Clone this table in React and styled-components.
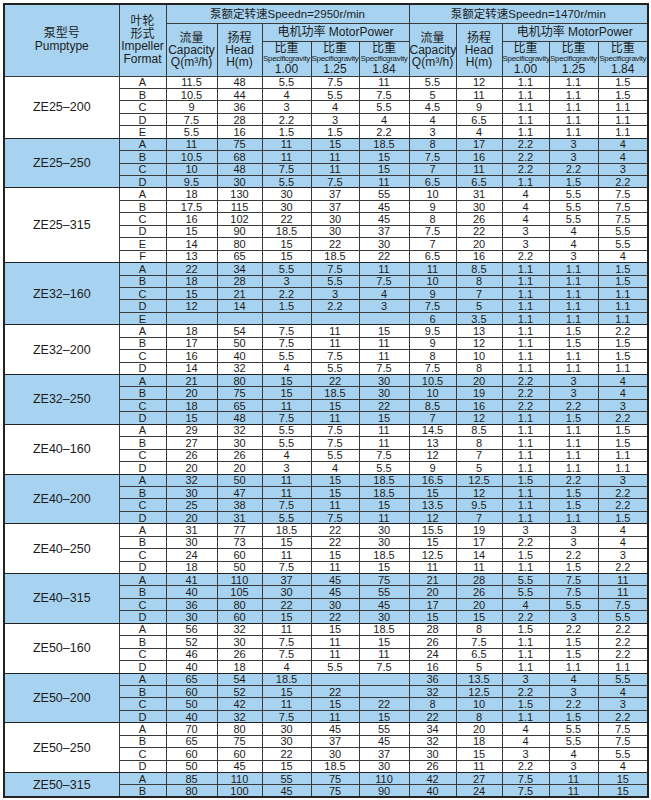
import React from 'react';
import styled, { createGlobalStyle } from 'styled-components';

const GlobalStyle = createGlobalStyle`
    html, body {
        margin: 0;
        padding: 0;
        background: #ffffff;
    }
`;

const BLUE = '#a7d3f0';
const LINE = '#3a3a3a';
const NARROW = '"Liberation Sans Narrow", "Arial Narrow", "Liberation Sans", Arial, sans-serif';

// column widths, left to right
const widths = [115, 47, 51, 45, 49, 48, 50, 47, 46, 47, 49, 50];

const groups = [
    { name: 'ZE25–200', rows: [
        ['A', '11.5', '48', '5.5', '7.5', '11', '5.5', '12', '1.1', '1.1', '1.5'],
        ['B', '10.5', '44', '4', '5.5', '7.5', '5', '11', '1.1', '1.1', '1.5'],
        ['C', '9', '36', '3', '4', '5.5', '4.5', '9', '1.1', '1.1', '1.1'],
        ['D', '7.5', '28', '2.2', '3', '4', '4', '6.5', '1.1', '1.1', '1.1'],
        ['E', '5.5', '16', '1.5', '1.5', '2.2', '3', '4', '1.1', '1.1', '1.1'],
    ] },
    { name: 'ZE25–250', rows: [
        ['A', '11', '75', '11', '15', '18.5', '8', '17', '2.2', '3', '4'],
        ['B', '10.5', '68', '11', '11', '15', '7.5', '16', '2.2', '3', '4'],
        ['C', '10', '48', '7.5', '11', '15', '7', '11', '2.2', '2.2', '3'],
        ['D', '9.5', '30', '5.5', '7.5', '11', '6.5', '6.5', '1.1', '1.5', '2.2'],
    ] },
    { name: 'ZE25–315', rows: [
        ['A', '18', '130', '30', '37', '55', '10', '31', '4', '5.5', '7.5'],
        ['B', '17.5', '115', '30', '37', '45', '9', '30', '4', '5.5', '7.5'],
        ['C', '16', '102', '22', '30', '45', '8', '26', '4', '5.5', '7.5'],
        ['D', '15', '90', '18.5', '30', '37', '7.5', '22', '3', '4', '5.5'],
        ['E', '14', '80', '15', '22', '30', '7', '20', '3', '4', '5.5'],
        ['F', '13', '65', '15', '18.5', '22', '6.5', '16', '2.2', '3', '4'],
    ] },
    { name: 'ZE32–160', rows: [
        ['A', '22', '34', '5.5', '7.5', '11', '11', '8.5', '1.1', '1.1', '1.5'],
        ['B', '18', '28', '3', '5.5', '7.5', '10', '8', '1.1', '1.1', '1.5'],
        ['C', '15', '21', '2.2', '3', '4', '9', '7', '1.1', '1.1', '1.1'],
        ['D', '12', '14', '1.5', '2.2', '3', '7.5', '5', '1.1', '1.1', '1.1'],
        ['E', '', '', '', '', '', '6', '3.5', '1.1', '1.1', '1.1'],
    ] },
    { name: 'ZE32–200', rows: [
        ['A', '18', '54', '7.5', '11', '15', '9.5', '13', '1.1', '1.5', '2.2'],
        ['B', '17', '50', '7.5', '11', '11', '9', '12', '1.1', '1.5', '1.5'],
        ['C', '16', '40', '5.5', '7.5', '11', '8', '10', '1.1', '1.1', '1.5'],
        ['D', '14', '32', '4', '5.5', '7.5', '7.5', '8', '1.1', '1.1', '1.1'],
    ] },
    { name: 'ZE32–250', rows: [
        ['A', '21', '80', '15', '22', '30', '10.5', '20', '2.2', '3', '4'],
        ['B', '20', '75', '15', '18.5', '30', '10', '19', '2.2', '3', '4'],
        ['C', '18', '65', '11', '15', '22', '8.5', '16', '2.2', '2.2', '3'],
        ['D', '15', '48', '7.5', '11', '15', '7', '12', '1.1', '1.5', '2.2'],
    ] },
    { name: 'ZE40–160', rows: [
        ['A', '29', '32', '5.5', '7.5', '11', '14.5', '8.5', '1.1', '1.1', '1.5'],
        ['B', '27', '30', '5.5', '7.5', '11', '13', '8', '1.1', '1.1', '1.5'],
        ['C', '26', '26', '4', '5.5', '7.5', '12', '7', '1.1', '1.1', '1.1'],
        ['D', '20', '20', '3', '4', '5.5', '9', '5', '1.1', '1.1', '1.1'],
    ] },
    { name: 'ZE40–200', rows: [
        ['A', '32', '50', '11', '15', '18.5', '16.5', '12.5', '1.5', '2.2', '3'],
        ['B', '30', '47', '11', '15', '18.5', '15', '12', '1.1', '1.5', '2.2'],
        ['C', '25', '38', '7.5', '11', '15', '13.5', '9.5', '1.1', '1.5', '2.2'],
        ['D', '20', '31', '5.5', '7.5', '11', '12', '7', '1.1', '1.1', '1.5'],
    ] },
    { name: 'ZE40–250', rows: [
        ['A', '31', '77', '18.5', '22', '30', '15.5', '19', '3', '3', '4'],
        ['B', '30', '73', '15', '22', '30', '15', '17', '2.2', '3', '4'],
        ['C', '24', '60', '11', '15', '18.5', '12.5', '14', '1.5', '2.2', '3'],
        ['D', '18', '50', '7.5', '11', '15', '11', '11', '1.1', '1.5', '2.2'],
    ] },
    { name: 'ZE40–315', rows: [
        ['A', '41', '110', '37', '45', '75', '21', '28', '5.5', '7.5', '11'],
        ['B', '40', '105', '30', '45', '55', '20', '26', '5.5', '7.5', '11'],
        ['C', '36', '80', '22', '30', '45', '17', '20', '4', '5.5', '7.5'],
        ['D', '30', '60', '15', '22', '30', '15', '15', '2.2', '3', '5.5'],
    ] },
    { name: 'ZE50–160', rows: [
        ['A', '56', '32', '11', '15', '18.5', '28', '8', '1.5', '2.2', '2.2'],
        ['B', '52', '30', '7.5', '11', '15', '26', '7.5', '1.1', '1.5', '2.2'],
        ['C', '46', '26', '7.5', '11', '11', '24', '6.5', '1.1', '1.5', '2.2'],
        ['D', '40', '18', '4', '5.5', '7.5', '16', '5', '1.1', '1.1', '1.1'],
    ] },
    { name: 'ZE50–200', rows: [
        ['A', '65', '54', '18.5', '', '', '36', '13.5', '3', '4', '5.5'],
        ['B', '60', '52', '15', '22', '', '32', '12.5', '2.2', '3', '4'],
        ['C', '50', '42', '11', '15', '22', '8', '10', '1.5', '2.2', '3'],
        ['D', '40', '32', '7.5', '11', '15', '22', '8', '1.1', '1.5', '2.2'],
    ] },
    { name: 'ZE50–250', rows: [
        ['A', '70', '80', '30', '45', '55', '34', '20', '4', '5.5', '7.5'],
        ['B', '65', '75', '30', '37', '45', '32', '18', '4', '5.5', '7.5'],
        ['C', '60', '60', '22', '30', '37', '30', '15', '3', '4', '5.5'],
        ['D', '50', '45', '15', '18.5', '30', '26', '11', '2.2', '3', '4'],
    ] },
    { name: 'ZE50–315', rows: [
        ['A', '85', '110', '55', '75', '110', '42', '27', '7.5', '11', '15'],
        ['B', '80', '100', '45', '75', '90', '40', '24', '7.5', '11', '15'],
    ] },
];

const Page = styled.div`
    padding: 3px 0 0 3px;
    font-family: "Liberation Sans", Arial, "Noto Sans CJK SC", sans-serif;
    color: #1c1c1c;
`;

const DataTable = styled.table`
    width: 644px;
    table-layout: fixed;
    border-collapse: collapse;
    border: 2px solid #222;
`;

const HeadRow = styled.tr`
    height: ${p => p.$h}px;
    background: ${BLUE};
`;

const HeadCell = styled.th`
    border: 1px solid ${LINE};
    padding: 0;
    font-weight: normal;
    font-size: ${p => p.$size || 12}px;
    line-height: ${p => p.$lh || 12}px;
    text-align: center;
    vertical-align: middle;
    white-space: nowrap;
`;

const GravityLabel = styled.span`
    display: block;
    font-family: ${NARROW};
    font-size: 8px;
    line-height: 10px;
    letter-spacing: -0.3px;
`;

const GravityValue = styled.span`
    display: block;
    font-size: 12px;
    line-height: 11px;
`;

const Row = styled.tr`
    height: 12.45px;
    background: ${p => (p.$blue ? BLUE : '#ffffff')};
    border-top: 1px solid ${p => (p.$first ? '#222' : LINE)};
`;

const Cell = styled.td`
    border-left: 1px solid ${LINE};
    border-right: 1px solid ${LINE};
    padding: 0;
    font-family: ${NARROW};
    font-size: 11px;
    line-height: 10px;
    text-align: center;
    vertical-align: middle;
    white-space: nowrap;
`;

const ModelCell = styled(Cell)`
    font-size: 12.5px;
    line-height: 12px;
    border-bottom: 1px solid #222;
`;

const Gravity = ({ value }) => (
    <HeadCell>
        <span>比重</span>
        <GravityLabel>Specificgravity</GravityLabel>
        <GravityValue>{value}</GravityValue>
    </HeadCell>
);

const SpeedHeader = ({ speed }) => (
    <HeadCell colSpan={5} $size={11.5}>泵额定转速Speedn={speed}r/min</HeadCell>
);

const App = () => {
    return (
        <Page>
            <GlobalStyle />
            <DataTable>
                <colgroup>
                    {widths.map((w, i) => <col key={i} style={{ width: w }} />)}
                </colgroup>
                <thead>
                    <HeadRow $h={19}>
                        <HeadCell rowSpan={3} $lh={13}>泵型号<br />Pumptype</HeadCell>
                        <HeadCell rowSpan={3} $lh={12.5}>叶轮<br />形式<br />Impeller<br />Format</HeadCell>
                        <SpeedHeader speed="2950" />
                        <SpeedHeader speed="1470" />
                    </HeadRow>
                    <HeadRow $h={18}>
                        <HeadCell rowSpan={2}>流量<br />Capacity<br />Q(m³/h)</HeadCell>
                        <HeadCell rowSpan={2}>扬程<br />Head<br />H(m)</HeadCell>
                        <HeadCell colSpan={3}>电机功率 MotorPower</HeadCell>
                        <HeadCell rowSpan={2}>流量<br />Capacity<br />Q(m³/h)</HeadCell>
                        <HeadCell rowSpan={2}>扬程<br />Head<br />H(m)</HeadCell>
                        <HeadCell colSpan={3}>电机功率 MotorPower</HeadCell>
                    </HeadRow>
                    <HeadRow $h={35}>
                        <Gravity value="1.00" />
                        <Gravity value="1.25" />
                        <Gravity value="1.84" />
                        <Gravity value="1.00" />
                        <Gravity value="1.25" />
                        <Gravity value="1.84" />
                    </HeadRow>
                </thead>
                <tbody>
                    {groups.map((g, gi) =>
                        g.rows.map((r, ri) => (
                            <Row key={g.name + r[0]} $blue={gi % 2 === 1} $first={ri === 0}>
                                {ri === 0 && <ModelCell rowSpan={g.rows.length}>{g.name}</ModelCell>}
                                {r.map((v, ci) => <Cell key={ci}>{v}</Cell>)}
                            </Row>
                        ))
                    )}
                </tbody>
            </DataTable>
        </Page>
    );
};

export default App;
